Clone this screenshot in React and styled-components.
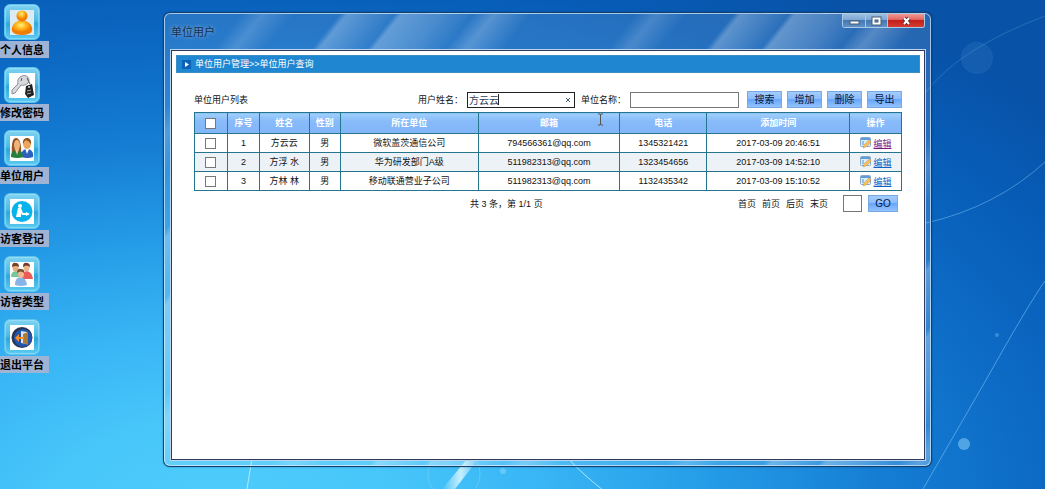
import React, {useState} from 'react';
import styled, {createGlobalStyle} from 'styled-components';

const GlobalStyle = createGlobalStyle`
  * {
    box-sizing: border-box;
  }
  body {
    margin: 0;
    font-family: 'Liberation Sans', 'Noto Sans CJK SC', sans-serif;
    font-size: 9px;
    line-height: 12px;
    color: #111111;
  }
  button,
  input {
    font-family: inherit;
    margin: 0;
  }
`;

const Desktop = styled.div`
  position: relative;
  display: flex;
  min-height: 100vh;
  overflow: hidden;
  background: radial-gradient(
    ellipse 96% 116% at 21% 106%,
    #50cefa 0%,
    #47c6fa 18%,
    #38b5f5 33%,
    #269ee8 48%,
    #157ed4 66%,
    #0c6ac5 82%,
    #075cb6 97%,
    #0852a8 110%
  );
`;

const Wallpaper = styled.svg`
  position: absolute;
  width: 100%;
  height: 100%;
`;

const Shortcuts = styled.nav`
  position: relative;
  display: flex;
  flex-direction: column;
  gap: 9px;
  width: 49px;
  padding-top: 4px;
`;

const Shortcut = styled.a`
  display: flex;
  flex-direction: column;
  color: #000000;
  text-decoration: none;
`;

const Tile = styled.span`
  display: flex;
  align-items: center;
  justify-content: center;
  width: 36px;
  height: 36px;
  margin: 0 0 1px 4px;
  border: 1px solid #5cc4ea;
  border-radius: 6px;
  background: linear-gradient(#7fd2f0, #4dbbe6 45%, #2fa6dc 55%, #5bcbf1);
  box-shadow: inset 0 0 1px 1px rgba(170, 230, 250, 0.6);
`;

const ShortcutName = styled.span`
  height: 17px;
  background: #9fb3d4;
  font-size: 11px;
  font-weight: bold;
  line-height: 18px;
  white-space: nowrap;
`;

const Stage = styled.main`
  position: relative;
  display: flex;
  flex: 1;
  min-width: 0;
  padding: 13px 114px 23px 115px;
`;

const Window = styled.section`
  display: flex;
  flex: 1;
  flex-direction: column;
  min-width: 0;
  padding: 0 5px 5px 6px;
  border: 1px solid rgba(215, 240, 255, 0.7);
  border-radius: 6px;
  background: repeating-linear-gradient(
      129deg,
      rgba(255, 255, 255, 0) 0,
      rgba(255, 255, 255, 0) 60px,
      rgba(255, 255, 255, 0.16) 76px,
      rgba(255, 255, 255, 0) 100px,
      rgba(255, 255, 255, 0) 136px,
      rgba(255, 255, 255, 0.26) 142px,
      rgba(255, 255, 255, 0.03) 179px,
      rgba(255, 255, 255, 0.28) 184px,
      rgba(255, 255, 255, 0.16) 215px,
      rgba(255, 255, 255, 0.02) 240px,
      rgba(255, 255, 255, 0.22) 256px,
      rgba(255, 255, 255, 0) 285px,
      rgba(255, 255, 255, 0) 306px
    ),
    rgba(255, 255, 255, 0.12);
  box-shadow: 0 0 0 1px #16406c, 0 0 2px 1px rgba(0, 20, 60, 0.4);
`;

const TitleBar = styled.header`
  display: flex;
  justify-content: space-between;
  height: 36px;
`;

const Title = styled.h1`
  margin: 0;
  padding: 10px 0 0;
  color: #17304f;
  font-size: 11px;
  font-weight: normal;
  line-height: 16px;
  text-shadow: 0 0 4px rgba(255, 255, 255, 0.5);
`;

const Controls = styled.div`
  display: flex;
  height: 14px;
  border: 1px solid #a9c9e8;
  border-top: 0;
  border-radius: 0 0 3px 3px;
  overflow: hidden;
`;

const Control = styled.button`
  display: flex;
  align-items: center;
  justify-content: center;
  width: ${props => (props.$close ? 37 : 22)}px;
  padding: 0;
  border: 0;
  border-left: ${props => (props.$first ? '0' : '1px solid #a9c9e8')};
  background: ${props =>
    props.$close
      ? 'linear-gradient(#f09a96, #e2625c 45%, #c2201b 50%, #d63b30)'
      : 'linear-gradient(#9dbfe2, #7ea7d3 45%, #4478b2 50%, #5f92c8)'};
`;

const Page = styled.div`
  flex: 1;
  padding: 4px 4px 0;
  border: 1px solid #303a5c;
  background: #ffffff;
  box-shadow: 0 0 0 1px #b9d6ee;
`;

const Crumbs = styled.div`
  display: flex;
  align-items: center;
  gap: 4px;
  height: 18px;
  padding-left: 5px;
  border: 1px solid #3c8fc4;
  background: #1f87d2;
  color: #ffffff;
`;

const Content = styled.div`
  padding: 18px 18px 0;
`;

const Toolbar = styled.form`
  display: flex;
  align-items: center;
  height: 17px;
  margin-bottom: 4px;
`;

const ListName = styled.h2`
  margin: 0 auto 0 0;
  font-size: inherit;
  font-weight: normal;
`;

const Field = styled.div`
  position: relative;
  display: flex;
  align-items: center;
  gap: 4px;
  margin-right: ${props => props.$space}px;
`;

const TextBox = styled.input`
  width: ${props => props.$width}px;
  height: ${props => props.$height || 16}px;
  padding: 0 1px;
  border: 1px solid ${props => (props.$active ? '#222222' : '#777777')};
  background: #ffffff;
  color: #2e4260;
  font-size: 10px;
  line-height: 14px;
  outline: none;
`;

const Caret = styled.span`
  position: absolute;
  right: 76px;
  width: 1px;
  height: 11px;
  background: #222222;
`;

const Clear = styled.button`
  position: absolute;
  right: 3px;
  display: flex;
  padding: 1px;
  border: 0;
  background: none;
`;

const Actions = styled.div`
  display: flex;
  gap: 5px;
`;

const Action = styled.button`
  width: ${props => props.$width || 35}px;
  height: 17px;
  padding: 0;
  border: 1px solid #78a9e3;
  background: linear-gradient(#a3ccff, #8dbdfd 45%, #68a5fb 50%, #92c3ff);
  color: #06173a;
  font-size: 10px;
  line-height: 15px;
`;

const Table = styled.table`
  width: 100%;
  border-collapse: collapse;
  table-layout: fixed;
  text-align: center;
`;

const HeadCell = styled.th`
  position: relative;
  height: 21px;
  padding: 0;
  border: 1px solid #26758f;
  background: linear-gradient(#9ed0fb, #87bafa 40%, #83b6f8);
  color: #ffffff;
`;

const Row = styled.tr`
  background: ${props => (props.$shade ? '#edf2f7' : '#ffffff')};
`;

const Cell = styled.td`
  height: 19px;
  padding: 0;
  border: 1px solid #26758f;
  white-space: nowrap;
`;

const Check = styled.input`
  display: block;
  width: 11px;
  height: 11px;
  margin: 0 auto;
  border: 1px solid #777777;
  background: #ffffff;
  appearance: none;
`;

const EditCell = styled.div`
  display: flex;
  align-items: center;
  justify-content: center;
  gap: 3px;
`;

const EditLink = styled.a`
  padding-top: 2px;
  color: ${props => (props.$visited ? '#7a1a86' : '#0b63c4')};
  text-decoration: underline;
`;

const Pointer = styled.svg`
  position: absolute;
  top: 0;
  right: 15px;
`;

const Pager = styled.footer`
  display: flex;
  align-items: center;
  height: 17px;
  margin-top: 4px;
  padding: 0 4px 0 39%;
`;

const PageLinks = styled.div`
  display: flex;
  gap: 6px;
  margin: 0 15px 0 auto;
`;

const PageLink = styled.a`
  color: #111111;
  text-decoration: none;
`;

const Jump = styled.div`
  display: flex;
  gap: 6px;
`;

const PersonIcon = () => (
  <svg width="24" height="25" viewBox="0 0 24 25">
    <defs>
      <radialGradient id="gold" cx="45%" cy="30%">
        <stop offset="0" stopColor="#fff08a" />
        <stop offset="0.5" stopColor="#ffb81c" />
        <stop offset="1" stopColor="#f07c00" />
      </radialGradient>
    </defs>
    <rect width="24" height="25" fill="#dcebf2" />
    <path d="M8 11C3 13 1 18 2 21q2 4 10 4t10-4c1-3-1-8-6-10z" fill="url(#gold)" />
    <circle cx="12" cy="6" r="5.500" fill="url(#gold)" />
  </svg>
);

const KeysIcon = () => (
  <svg width="26" height="25" viewBox="0 0 26 25">
    <rect width="26" height="25" fill="#fff" />
    <path
      d="M13 3c5-2 9 3 6 7-2 2-5 3-7 2l-6 8-3 1v-4l6-6c-1-4 1-7 4-8z"
      fill="#d8d9df"
      stroke="#8a8d98"
    />
    <path d="M18 5l3 6M13 5l-1 3" stroke="#555" fill="none" />
    <path d="M17 13l6-2 2 11-6 3-3-4z" fill="#222" />
    <circle cx="20" cy="14" r="1" fill="#ddd" />
    <path d="M18 18l4-1M18 21l4-1" stroke="#aaa" />
  </svg>
);

const CoupleIcon = () => (
  <svg width="24" height="25" viewBox="0 0 24 25">
    <rect width="24" height="25" fill="#fff" />
    <path d="M11 21c0-5 2-8 6-8s7 3 6 8q-5 2-12 0z" fill="#2c62bd" />
    <path d="M15 12l2 6 2-5z" fill="#fff" />
    <ellipse cx="17" cy="7.500" rx="4" ry="5.500" fill="#efa558" />
    <path d="M13 8c-1-8 9-8 8 0q-2-3-5-4-2 1-3 4z" fill="#885024" />
    <path d="M2 20C1 6 3 2 6 2s6 4 5 18z" fill="#94572b" />
    <path d="M1 21c0-4 1-6 4-6l2 2 2-2c3 0 4 3 4 6q-5 2-12 0z" fill="#25803d" />
    <path d="M5 13l2 6 2-6z" fill="#f5c495" />
    <ellipse cx="7" cy="9" rx="3" ry="5" fill="#f0b47b" />
  </svg>
);

const VisitorIcon = () => (
  <svg width="24" height="25" viewBox="0 0 24 25">
    <rect width="24" height="25" fill="#fff" />
    <circle cx="12" cy="12.500" r="10.500" fill="#08b3eb" />
    <circle cx="10" cy="7" r="2" fill="#fff" />
    <path d="M8 9h3l2 5h5v2h-6l-1-2v4H6z" fill="#fff" />
    <path d="M16 13l4 2-4 2z" fill="#fff" />
  </svg>
);

const GroupIcon = () => (
  <svg width="24" height="25" viewBox="0 0 24 25">
    <rect width="24" height="25" fill="#fff" />
    <path d="M1 15q0-6 5-6 4 1 5 6z" fill="#74c79b" />
    <path d="M12 17q0-8 5-8 5 1 6 8z" fill="#ed5b56" />
    <ellipse cx="5.500" cy="5.500" rx="3" ry="4" fill="#e9ad80" />
    <path d="M2 5q0-5 4-4 3 0 3 4-3-2-7 0z" fill="#744326" />
    <ellipse cx="16.500" cy="5.500" rx="3" ry="4" fill="#edb58d" />
    <path d="M13 5q0-5 4-4 3 0 3 4-3-3-7 0z" fill="#703c22" />
    <path d="M5 23q0-8 6-8 5 1 6 8-6 2-12 0z" fill="#87b4e8" />
    <ellipse cx="11" cy="12" rx="3" ry="4" fill="#efba93" />
    <path d="M7 11q0-5 4-4 4 0 3 4-3-3-7 0z" fill="#80502f" />
  </svg>
);

const ExitIcon = () => (
  <svg width="24" height="25" viewBox="0 0 24 25">
    <rect width="24" height="25" fill="#fff" />
    <circle cx="12" cy="12.500" r="10.500" fill="#27344f" />
    <circle cx="13" cy="13" r="9" fill="#2056b0" />
    <path d="M11 6l6 1v12l-6-1z" fill="#dfe6ef" />
    <path d="M13 9l5-2v13l-5-2z" fill="#b07a34" />
    <path d="M5 13l4-4v3h5v2H9v3z" fill="#ff8b1e" />
  </svg>
);

const NoteIcon = () => (
  <svg width="11" height="12" viewBox="0 0 11 12" aria-hidden="true">
    <rect x="0.500" y="0.500" width="10" height="9" rx="1" fill="#d8ecff" stroke="#86a9cc" />
    <path d="M1 2h9" stroke="#5f9bd4" strokeWidth="2" />
    <path d="M2 5h2M2 7h2" stroke="#5a92cc" />
    <path d="M3 11l1-3 5-5 2 2-5 5z" fill="#f8c05a" stroke="#d0923c" strokeWidth="0.500" />
  </svg>
);

const shortcuts = [
  {name: '个人信息', Icon: PersonIcon},
  {name: '修改密码', Icon: KeysIcon},
  {name: '单位用户', Icon: CoupleIcon},
  {name: '访客登记', Icon: VisitorIcon},
  {name: '访客类型', Icon: GroupIcon},
  {name: '退出平台', Icon: ExitIcon},
];

// share of the table width for each column, in parts of 708
const columns = [33, 32, 50, 31, 138, 142, 87, 143, 52];

const users = [
  {
    id: 1,
    name: '方云云',
    sex: '男',
    unit: '微软盖茨通信公司',
    mail: '794566361@qq.com',
    phone: '1345321421',
    time: '2017-03-09 20:46:51',
  },
  {
    id: 2,
    name: '方浮 水',
    sex: '男',
    unit: '华为研发部门A级',
    mail: '511982313@qq.com',
    phone: '1323454656',
    time: '2017-03-09 14:52:10',
  },
  {
    id: 3,
    name: '方林 林',
    sex: '男',
    unit: '移动联通营业子公司',
    mail: '511982313@qq.com',
    phone: '1132435342',
    time: '2017-03-09 15:10:52',
  },
];

const Background = () => (
  <Wallpaper viewBox="0 0 1045 489" preserveAspectRatio="none" aria-hidden="true">
    <defs>
      <linearGradient id="ray" x1="0" x2="1">
        <stop offset="0" stopColor="#fff" stopOpacity="0" />
        <stop offset="0.5" stopColor="#e6fbff" stopOpacity="0.8" />
        <stop offset="1" stopColor="#fff" stopOpacity="0" />
      </linearGradient>
    </defs>
    <g fill="none" stroke="#9fdcff">
      <path d="M926 92Q960 48 1045 16" opacity="0.2" />
      <path d="M926 223Q996 207 1045 162" opacity="0.4" />
      <path d="M923 489L986 380Q1028 305 1045 281" opacity="0.45" />
      <path d="M247 489L252 458M568 458Q580 472 604 491" stroke="#c9f2ff" opacity="0.8" />
      <circle cx="977" cy="58" r="15" opacity="0.1" strokeWidth="2" />
      <circle cx="454" cy="474" r="26" opacity="0.35" />
    </g>
    <path d="M442 489L468 458h11L455 489z" fill="url(#ray)" />
    <circle cx="977" cy="58" r="14" fill="#7fc4f5" opacity="0.1" />
    <circle cx="964" cy="444" r="6" fill="#7cc6f5" opacity="0.6" />
    <circle cx="997" cy="335" r="2" fill="#7cc6f5" opacity="0.4" />
    <circle cx="503" cy="471" r="3" fill="#a5e4ff" opacity="0.4" />
  </Wallpaper>
);

const App = () => {
  const [userName, setUserName] = useState('方云云');
  const [unitName, setUnitName] = useState('');

  return (
    <Desktop>
      <GlobalStyle />
      <Background />
      <Shortcuts>
        {shortcuts.map(({name, Icon}) => (
          <Shortcut key={name} href="#">
            <Tile>
              <Icon />
            </Tile>
            <ShortcutName>{name}</ShortcutName>
          </Shortcut>
        ))}
      </Shortcuts>
      <Stage>
        <Window>
          <TitleBar>
            <Title>单位用户</Title>
            <Controls>
              <Control $first aria-label="最小化">
                <svg width="11" height="10">
                  <rect x="1" y="5" width="9" height="3" fill="#fff" stroke="#4a5c75" />
                </svg>
              </Control>
              <Control aria-label="最大化">
                <svg width="11" height="10">
                  <rect x="1" y="1" width="9" height="8" fill="#fff" stroke="#4a5c75" />
                  <rect x="4" y="4" width="3" height="2" fill="#6f94bd" stroke="#4a5c75" />
                </svg>
              </Control>
              <Control $close aria-label="关闭">
                <svg width="11" height="10">
                  <path d="M3 2l5 6M8 2L3 8" stroke="#5c3038" strokeWidth="4" />
                  <path d="M3 2l5 6M8 2L3 8" stroke="#fff" strokeWidth="2" />
                </svg>
              </Control>
            </Controls>
          </TitleBar>
          <Page>
            <Crumbs>
              <svg width="9" height="9" aria-hidden="true">
                <rect width="9" height="9" fill="#0b62b8" />
                <path d="M3 2v5l4-2.500z" fill="#fff" />
              </svg>
              单位用户管理&gt;&gt;单位用户查询
            </Crumbs>
            <Content>
              <Toolbar onSubmit={e => e.preventDefault()}>
                <ListName>单位用户列表</ListName>
                <Field $space={6}>
                  <label htmlFor="user-name">用户姓名：</label>
                  <TextBox
                    id="user-name"
                    $width={108}
                    $active
                    value={userName}
                    onChange={e => setUserName(e.target.value)}
                  />
                  <Caret />
                  <Clear type="button" aria-label="清除" onClick={() => setUserName('')}>
                    <svg width="6" height="6">
                      <path d="M1 1l4 4M5 1L1 5" stroke="#49617f" />
                    </svg>
                  </Clear>
                </Field>
                <Field $space={8}>
                  <label htmlFor="unit-name">单位名称：</label>
                  <TextBox
                    id="unit-name"
                    $width={109}
                    value={unitName}
                    onChange={e => setUnitName(e.target.value)}
                  />
                </Field>
                <Actions>
                  <Action type="submit">搜索</Action>
                  <Action type="button">增加</Action>
                  <Action type="button">删除</Action>
                  <Action type="button">导出</Action>
                </Actions>
              </Toolbar>
              <Table>
                <colgroup>
                  {columns.map((part, i) => (
                    <col key={i} style={{width: `${(part / 708) * 100}%`}} />
                  ))}
                </colgroup>
                <thead>
                  <tr>
                    <HeadCell>
                      <Check type="checkbox" aria-label="全选" />
                    </HeadCell>
                    <HeadCell>序号</HeadCell>
                    <HeadCell>姓名</HeadCell>
                    <HeadCell>性别</HeadCell>
                    <HeadCell>所在单位</HeadCell>
                    <HeadCell>
                      邮箱
                      <Pointer width="7" height="13">
                        <path d="M1 1h2M4 1h2M3.500 1v11M1 12h2M4 12h2" stroke="#555" />
                      </Pointer>
                    </HeadCell>
                    <HeadCell>电话</HeadCell>
                    <HeadCell>添加时间</HeadCell>
                    <HeadCell>操作</HeadCell>
                  </tr>
                </thead>
                <tbody>
                  {users.map((user, i) => (
                    <Row key={user.id} $shade={i % 2 === 1}>
                      <Cell>
                        <Check type="checkbox" aria-label={user.name} />
                      </Cell>
                      <Cell>{user.id}</Cell>
                      <Cell>{user.name}</Cell>
                      <Cell>{user.sex}</Cell>
                      <Cell>{user.unit}</Cell>
                      <Cell>{user.mail}</Cell>
                      <Cell>{user.phone}</Cell>
                      <Cell>{user.time}</Cell>
                      <Cell>
                        <EditCell>
                          <NoteIcon />
                          <EditLink href="#" $visited={i === 0}>
                            编辑
                          </EditLink>
                        </EditCell>
                      </Cell>
                    </Row>
                  ))}
                </tbody>
              </Table>
              <Pager>
                <span>共 3 条，第 1/1 页</span>
                <PageLinks>
                  <PageLink href="#">首页</PageLink>
                  <PageLink href="#">前页</PageLink>
                  <PageLink href="#">后页</PageLink>
                  <PageLink href="#">末页</PageLink>
                </PageLinks>
                <Jump>
                  <TextBox $width={19} $height={17} aria-label="页码" />
                  <Action type="button" $width={30}>
                    GO
                  </Action>
                </Jump>
              </Pager>
            </Content>
          </Page>
        </Window>
      </Stage>
    </Desktop>
  );
};

export default App;
